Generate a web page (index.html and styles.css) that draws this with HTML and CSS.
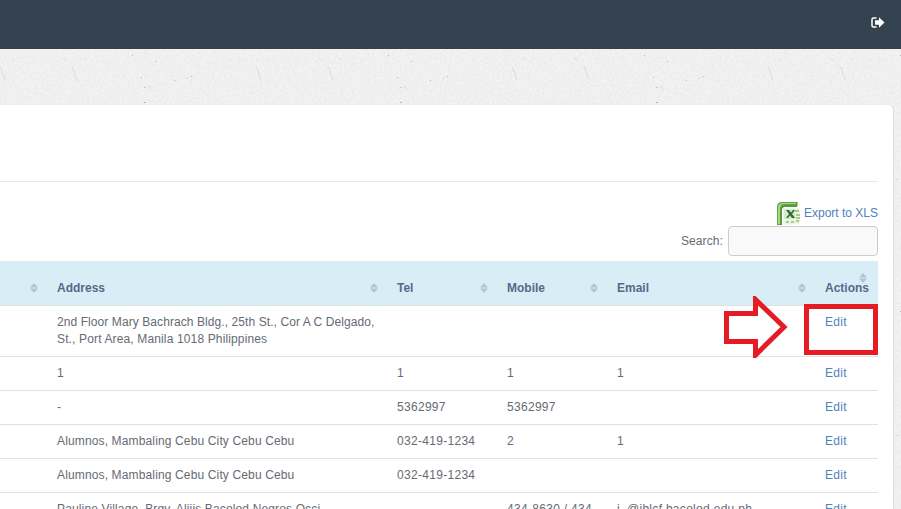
FILE: index.html
```
<!DOCTYPE html>
<html lang="en">
<head>
<meta charset="utf-8">
<title>Directory</title>
<link rel="stylesheet" href="styles.css">
</head>
<body>
<svg class="texture" aria-hidden="true">
  <defs>
    <filter id="grain" x="0" y="0" width="100%" height="100%" color-interpolation-filters="sRGB">
      <feTurbulence type="fractalNoise" baseFrequency="0.4" numOctaves="3" seed="4"/>
      <feColorMatrix values="0.06 0 0 0 0.91  0.06 0 0 0 0.91  0.06 0 0 0 0.91  0 0 0 0 1"/>
    </filter>
    <pattern id="flecks" width="256" height="256" patternUnits="userSpaceOnUse" y="49">
      <path d="M.5 18l4.500 13M72.500 18l4.500 13" stroke="#d9dada" fill="none"/>
      <path d="M11 9l3 2M83 9l3 2M62 9l4 2M146 39l4-2 1 5M186 30l3-2" stroke="#e0e1e1" fill="none"/>
      <path d="M132 6h1v1h-1zM155 12h1v1h-1zM141 28h1v1h-1zM174 31h1v1h-1zM191 27h1v1h-1zM144 38h1v1h-1zM144 53h2v1h-2zM129 130h1v1h-1z" fill="#b3b5b6"/>
    </pattern>
  </defs>
  <rect width="901" height="509" filter="url(#grain)"/>
  <rect width="901" height="509" fill="url(#flecks)"/>
</svg>
<svg class="defs" aria-hidden="true">
  <symbol id="sort" viewBox="0 0 8 10"><path d="M4 0l4 4.500H0zM0 5.500h8L4 10z" fill="#b0c4d4"/></symbol>
</svg>
<header class="navbar">
  <svg class="logout" viewBox="0 0 14 11"><path d="M5.500 1H2.500Q1 1 1 2.500v6Q1 10 2.500 10h3" fill="none" stroke="#fff" stroke-width="1.500"/><path d="M4 3.300h4V.3l5.500 5.200L8 10.700V7.700H4z" fill="#fff"/></svg>
</header>
<main class="panel">
  <div class="panel-title"></div>
  <div class="export">
    <svg class="xls" viewBox="0 0 24 24">
      <path d="M0 23V5q0-5 5-5h15v5H8q-3 0-3 3v15z" fill="#62a644"/>
      <path d="M1 22V6q0-5 5-5h13v1H7Q3 2 3 7v15z" fill="#a8d58c"/>
      <path d="M20 0v4H8Q4 4 4 8v15" fill="none" stroke="#4a8f3a"/>
      <path d="M6 6l17 1v15l-17 1z" fill="#edf4e8"/>
      <path d="M18 8h4v2h-4zM19 12h4v2h-4zM19 15h4v2h-4zM9 19h3v2H9zM14 19h3v2h-3zM19 18h3v2h-3z" fill="#a5cf85"/>
      <path d="M7 7h11v10H7z" fill="#d8e9cf"/>
      <path d="M9 8h3l2 2.500L16 8h2l-3 4 3 4h-3l-2-2.500L11 16H9l3-4z" fill="#26752e"/>
    </svg>
    <a href="#">Export to XLS</a>
  </div>
  <div class="search"><label for="q">Search:</label><input id="q" type="text"></div>
  <table class="grid">
    <colgroup><col class="c-name"><col class="c-address"><col class="c-tel"><col class="c-mobile"><col class="c-email"><col class="c-actions"></colgroup>
    <thead>
      <tr>
        <th><svg class="sort"><use href="#sort"/></svg></th>
        <th>Address<svg class="sort"><use href="#sort"/></svg></th>
        <th>Tel<svg class="sort"><use href="#sort"/></svg></th>
        <th>Mobile<svg class="sort"><use href="#sort"/></svg></th>
        <th>Email<svg class="sort"><use href="#sort"/></svg></th>
        <th class="wrapped">Actions<svg class="sort"><use href="#sort"/></svg></th>
      </tr>
    </thead>
    <tbody>
      <tr><td></td><td><span class="tight">2nd Floor Mary Bachrach Bldg., 25th St., Cor A C Delgado,</span><br>St., Port Area, Manila 1018 Philippines</td><td></td><td></td><td></td><td><a href="#">Edit</a></td></tr>
      <tr><td></td><td>1</td><td>1</td><td>1</td><td>1</td><td><a href="#">Edit</a></td></tr>
      <tr><td></td><td>-</td><td>5362997</td><td>5362997</td><td></td><td><a href="#">Edit</a></td></tr>
      <tr><td></td><td>Alumnos, Mambaling Cebu City Cebu Cebu</td><td>032-419-1234</td><td>2</td><td>1</td><td><a href="#">Edit</a></td></tr>
      <tr><td></td><td>Alumnos, Mambaling Cebu City Cebu Cebu</td><td>032-419-1234</td><td></td><td></td><td><a href="#">Edit</a></td></tr>
      <tr><td></td><td>Pauline Village, Brgy. Alijis Bacolod Negros Occi</td><td></td><td>434-8630 / 434</td><td>j_@jblcf.bacolod.edu.ph</td><td><a href="#">Edit</a></td></tr>
    </tbody>
  </table>
</main>
<svg class="callout" viewBox="0 0 156 62">
  <path d="M3.500 17.500h29V3.500L61 31 32.500 59V45.500h-29z" fill="#fff" stroke="#e51c23" stroke-width="5"/>
  <path d="M83.500 10.500h69v46h-69z" fill="none" stroke="#e51c23" stroke-width="5"/>
</svg>
</body>
</html>
```
FILE: styles.css
```
* { box-sizing: border-box; }
html, body { height: 509px; overflow: hidden; }
body {
  margin: 0;
  display: flex;
  flex-direction: column;
  position: relative;
  background: #f0f0f0;
  color: #676a74;
  font: 12px/17px "Liberation Sans", Arial, sans-serif;
  letter-spacing: 0.3px;
}
a { color: #4f82ba; text-decoration: none; }
.texture { position: absolute; inset: 0; width: 901px; height: 509px; z-index: -1; }
.defs { position: absolute; width: 0; height: 0; }
.navbar {
  flex: none;
  height: 49px;
  background: #34414e;
  display: flex;
  justify-content: flex-end;
  padding: 17px 16px 0 0;
}
.logout { width: 14px; height: 11px; }
.panel {
  flex: none;
  height: 420px;
  margin: 56px 8px 0 0;
  padding: 0 15px 0 0;
  background: #fff;
  border-radius: 0 5px 0 0;
  box-shadow: 1px 0 1px #dedede;
}
.panel-title { height: 77px; border-bottom: 1px solid #e8e8e8; }
.export {
  display: flex;
  justify-content: flex-end;
  height: 44px;
  padding-top: 20px;
  gap: 3px;
  letter-spacing: 0;
}
.export a { padding-top: 3px; }
.xls { width: 24px; height: 24px; }
.search { display: flex; justify-content: flex-end; height: 35px; gap: 5px; }
.search label { padding-top: 7px; letter-spacing: 0.1px; }
.search input {
  width: 150px;
  height: 30px;
  background: #f9f9f9;
  border: 1px solid #ccc;
  border-radius: 4px;
}
.grid { width: 878px; table-layout: fixed; border-collapse: separate; border-spacing: 0; }
.c-name { width: 49px; }
.c-address { width: 340px; }
.c-tel, .c-mobile { width: 110px; }
.c-email { width: 208px; }
.c-actions { width: 61px; }
.grid th, .grid td {
  text-align: left;
  vertical-align: top;
  white-space: nowrap;
  border-bottom: 1px solid #e0e1e1;
}
.grid th {
  position: relative;
  height: 45px;
  padding: 19px 8px 0;
  background: #d9edf7;
  color: #566a87;
  letter-spacing: 0;
}
.grid td { height: 34px; padding: 8px; }
.grid td:nth-child(2) { letter-spacing: 0.14px; }
.grid .tight { letter-spacing: 0.08px; }
.sort { position: absolute; width: 8px; height: 10px; right: 11px; top: 22px; }
.wrapped .sort { top: 12px; }
.callout { position: absolute; left: 723px; top: 296px; width: 156px; height: 62px; }
```
